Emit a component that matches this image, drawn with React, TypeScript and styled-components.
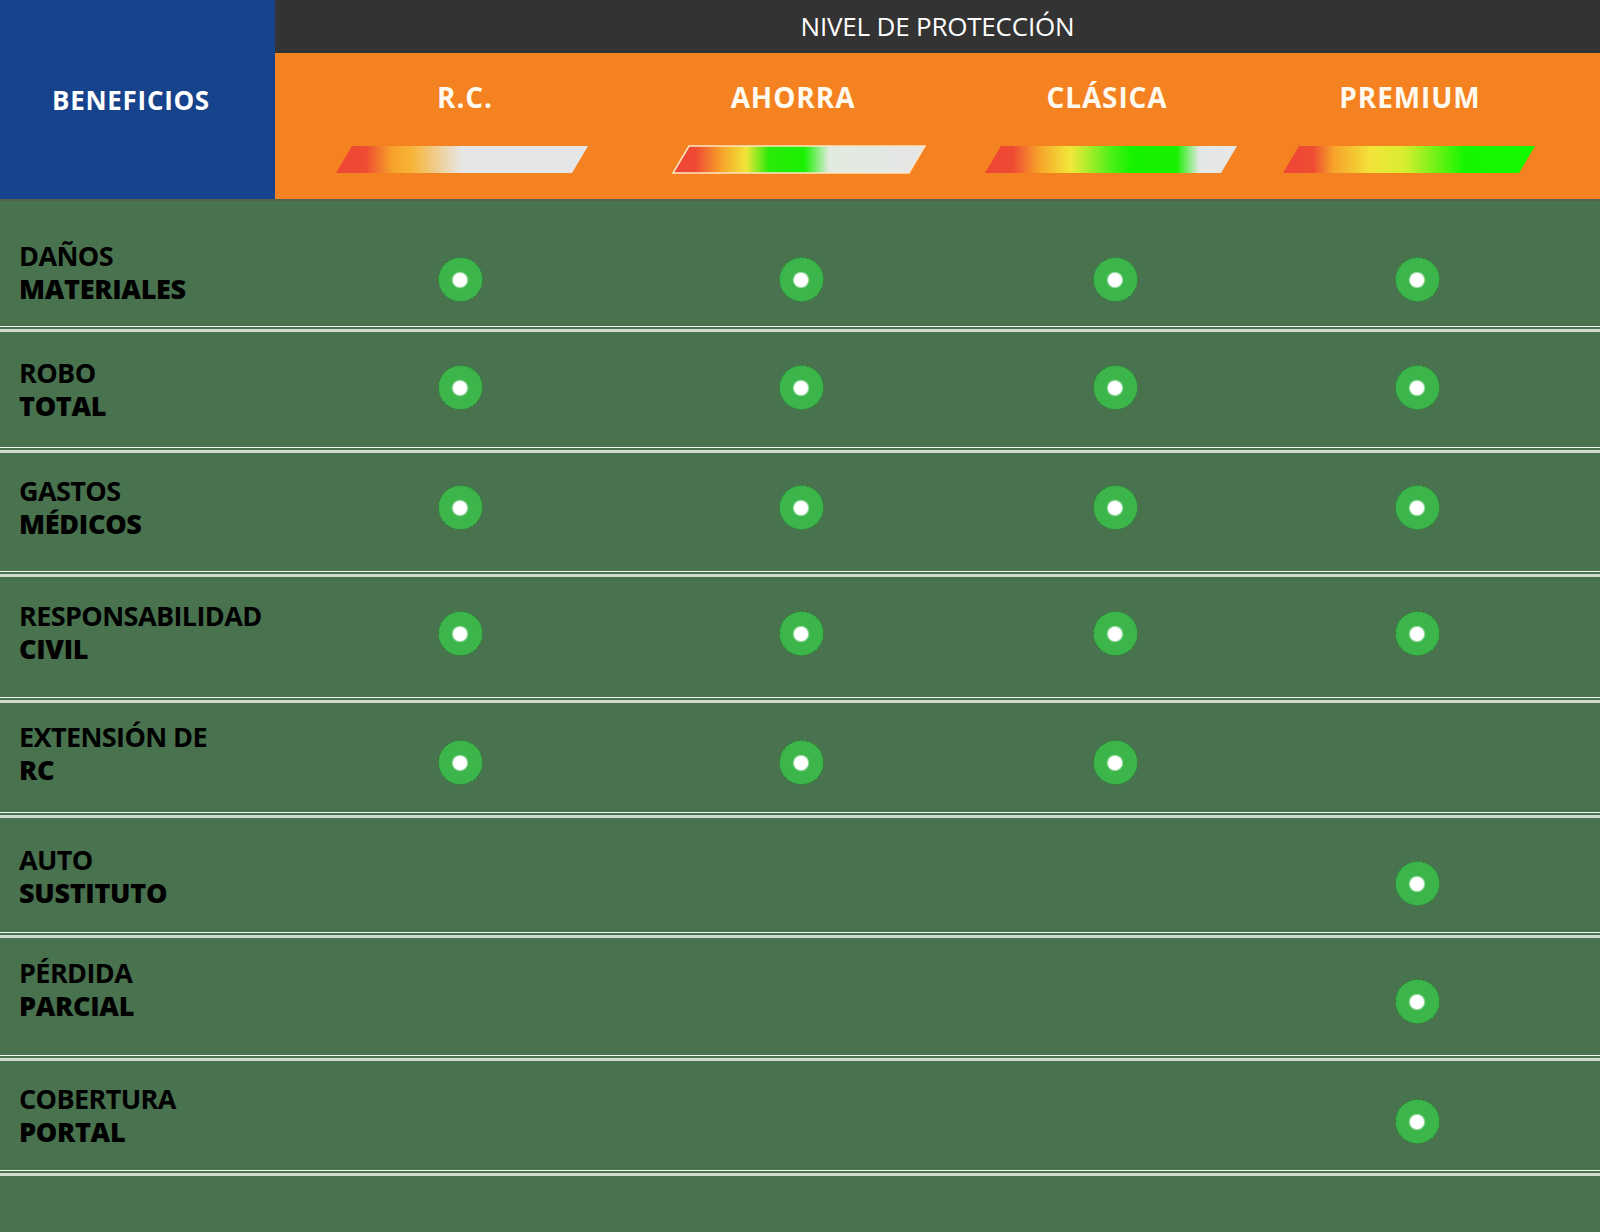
import React from "react";
import styled, { createGlobalStyle } from "styled-components";

const GlobalStyle = createGlobalStyle`
  html, body {
    margin: 0;
    padding: 0;
    background: #49724f;
  }
  body {
    font-family: "Open Sans", "Liberation Sans", sans-serif;
  }
`;

const HEAD_COLS = "374px 300px 324px 272px 1fr";
const BODY_COLS = "275px 370px 312px 316px 288px 1fr";

type Stop = [number, string];

interface Plan {
  name: string;
  shift: number;
  stops: Stop[];
  outline?: boolean;
}

const plans: Plan[] = [
  {
    name: "R.C.",
    shift: 3,
    stops: [
      [0, "#ee4535"],
      [0.12, "#ef4d33"],
      [0.22, "#f6a02a"],
      [0.3, "#f8b438"],
      [0.5, "#e6e6e6"],
      [1, "#e6e6e6"],
    ],
  },
  {
    name: "AHORRA",
    shift: -6,
    outline: true,
    stops: [
      [0, "#ee4535"],
      [0.09, "#ee4a33"],
      [0.19, "#f7a02a"],
      [0.29, "#f1e53a"],
      [0.38, "#2cea0a"],
      [0.52, "#19f000"],
      [0.62, "#e2ebe0"],
      [1, "#e6e6e6"],
    ],
  },
  {
    name: "CLÁSICA",
    shift: -4,
    stops: [
      [0, "#ee4535"],
      [0.11, "#ef4a33"],
      [0.21, "#f7a02a"],
      [0.34, "#f2e83a"],
      [0.5, "#4ef018"],
      [0.58, "#15f300"],
      [0.76, "#18f000"],
      [0.85, "#e4e8e4"],
      [1, "#e6e6e6"],
    ],
  },
  {
    name: "PREMIUM",
    shift: 1,
    stops: [
      [0, "#ef4535"],
      [0.12, "#ef4d33"],
      [0.2, "#f6a22a"],
      [0.35, "#f2e43a"],
      [0.48, "#d8ee30"],
      [0.72, "#15f600"],
      [1, "#14fa00"],
    ],
  },
];

interface Benefit {
  top: string;
  bottom: string;
  cover: number[];
  height: number;
  textTop: number;
  dotTop: number;
}

const benefits: Benefit[] = [
  { top: "DAÑOS", bottom: "MATERIALES", cover: [1, 1, 1, 1], height: 125, textTop: 38, dotTop: 56 },
  { top: "ROBO", bottom: "TOTAL", cover: [1, 1, 1, 1], height: 115, textTop: 24, dotTop: 33 },
  { top: "GASTOS", bottom: "MÉDICOS", cover: [1, 1, 1, 1], height: 118, textTop: 21, dotTop: 32 },
  { top: "RESPONSABILIDAD", bottom: "CIVIL", cover: [1, 1, 1, 1], height: 120, textTop: 22, dotTop: 34 },
  { top: "EXTENSIÓN DE", bottom: "RC", cover: [1, 1, 1, 0], height: 109, textTop: 17, dotTop: 37 },
  { top: "AUTO", bottom: "SUSTITUTO", cover: [0, 0, 0, 1], height: 114, textTop: 25, dotTop: 43 },
  { top: "PÉRDIDA", bottom: "PARCIAL", cover: [0, 0, 0, 1], height: 117, textTop: 18, dotTop: 41 },
  { top: "COBERTURA", bottom: "PORTAL", cover: [0, 0, 0, 1], height: 109, textTop: 21, dotTop: 38 },
];

const Page = styled.div`
  width: 1600px;
  min-height: 1232px;
  background: #49724f;
`;

const Header = styled.div`
  display: grid;
  grid-template-columns: 275px 1fr;
  border-bottom: 2px solid #56604e;
`;

const Corner = styled.div`
  background: #17428c;
  color: #fff;
  display: flex;
  align-items: center;
  justify-content: center;
  padding-right: 13px;
  font-size: 26px;
  font-weight: 700;
  letter-spacing: 0.7px;
`;

const HeaderRight = styled.div`
  display: flex;
  flex-direction: column;
`;

const TitleBar = styled.div`
  height: 53px;
  background: #333333;
  color: #fff;
  display: flex;
  align-items: center;
  justify-content: center;
  padding-bottom: 1px;
  box-sizing: border-box;
  font-size: 26px;
  font-weight: 400;
  letter-spacing: -0.2px;
`;

const PlanStrip = styled.div`
  height: 146px;
  background: #f58220;
  display: grid;
  grid-template-columns: ${HEAD_COLS};
`;

const PlanCell = styled.div`
  display: flex;
  flex-direction: column;
  align-items: center;
  padding-top: 27px;
`;

const PlanName = styled.div<{ $shift: number }>`
  margin-left: ${(p) => p.$shift * 2}px;
  color: #fffaf0;
  font-size: 28px;
  line-height: 34px;
  font-weight: 700;
  letter-spacing: 0.9px;
`;

const BarSvg = styled.svg`
  display: block;
  margin-top: 32px;
  overflow: visible;
`;

const Row = styled.div<{ $h: number }>`
  display: grid;
  grid-template-columns: ${BODY_COLS};
  align-items: start;
  height: ${(p) => p.$h}px;
`;

const Rule = styled.div`
  height: 2px;
  border-top: 1px solid #f4f6f0;
  border-bottom: 3px solid #d3dacd;
`;

const Label = styled.div<{ $top: number }>`
  padding: ${(p) => p.$top}px 0 0 19px;
  color: #000;
  font-size: 27px;
  line-height: 33px;
  white-space: nowrap;
`;

const LabelTop = styled.div`
  font-weight: 700;
  letter-spacing: -0.6px;
`;

const LabelBottom = styled.div`
  font-weight: 800;
  letter-spacing: -0.3px;
`;

const Cell = styled.div<{ $top: number }>`
  display: flex;
  justify-content: center;
  padding-top: ${(p) => p.$top}px;
`;

const Dot = styled.div`
  width: 45px;
  height: 45px;
  border-radius: 50%;
  background: #3cb64a;
  box-sizing: border-box;
  border: 1px dotted #2f5a33;
  display: flex;
  align-items: center;
  justify-content: center;
  &::after {
    content: "";
    width: 14px;
    height: 14px;
    border-radius: 50%;
    background: #fff;
    box-shadow: 0 0 1px 1px rgba(255, 255, 255, 0.6);
  }
`;

function GradientBar({ plan, id }: { plan: Plan; id: string }) {
  const w = 252;
  const h = 27;
  const skew = 16;
  return (
    <BarSvg width={w} height={h} viewBox={`0 0 ${w} ${h}`}>
      <defs>
        <linearGradient id={id} x1="0" y1="0" x2="1" y2="0">
          {plan.stops.map(([o, c], i) => (
            <stop key={i} offset={o} stopColor={c} />
          ))}
        </linearGradient>
      </defs>
      <polygon
        points={`${skew},0 ${w},0 ${w - skew},${h} 0,${h}`}
        fill={`url(#${id})`}
        stroke={plan.outline ? "#fde6c2" : "none"}
        strokeWidth={plan.outline ? 1.5 : 0}
      />
    </BarSvg>
  );
}

export default function App() {
  return (
    <Page>
      <GlobalStyle />
      <Header>
        <Corner>BENEFICIOS</Corner>
        <HeaderRight>
          <TitleBar>NIVEL DE PROTECCIÓN</TitleBar>
          <PlanStrip>
            {plans.map((p, i) => (
              <PlanCell key={p.name}>
                <PlanName $shift={p.shift}>{p.name}</PlanName>
                <GradientBar plan={p} id={`bar-${i}`} />
              </PlanCell>
            ))}
          </PlanStrip>
        </HeaderRight>
      </Header>
      {benefits.map((b) => (
        <React.Fragment key={b.top}>
          <Row $h={b.height}>
            <Label $top={b.textTop}>
              <LabelTop>{b.top}</LabelTop>
              <LabelBottom>{b.bottom}</LabelBottom>
            </Label>
            {b.cover.map((c, i) => (
              <Cell key={i} $top={b.dotTop}>
                {c ? <Dot /> : null}
              </Cell>
            ))}
          </Row>
          <Rule />
        </React.Fragment>
      ))}
    </Page>
  );
}
